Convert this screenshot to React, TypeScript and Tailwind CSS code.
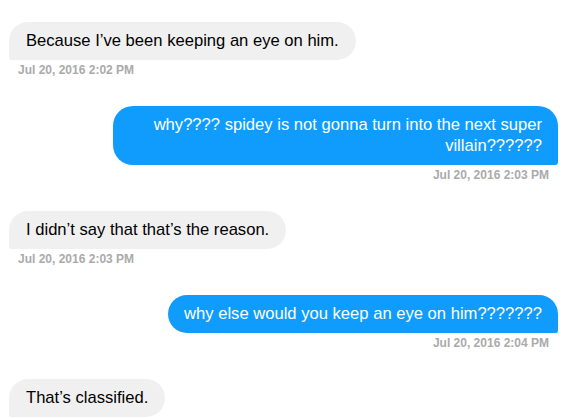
const messages = [
  { id: 1, mine: false, text: "Because I’ve been keeping an eye on him.", time: "Jul 20, 2016 2:02 PM" },
  { id: 2, mine: true, text: "why???? spidey is not gonna turn into the next super villain??????", time: "Jul 20, 2016 2:03 PM" },
  { id: 3, mine: false, text: "I didn’t say that that’s the reason.", time: "Jul 20, 2016 2:03 PM" },
  { id: 4, mine: true, text: "why else would you keep an eye on him???????", time: "Jul 20, 2016 2:04 PM" },
  { id: 5, mine: false, text: "That’s classified.", time: "" },
];

export default function App() {
  return (
    <div className="w-[566px] h-[419px] overflow-hidden bg-white font-['Liberation_Sans',Arial,sans-serif]">
      <div className="flex flex-col pt-[22px] pr-[8px] pl-[9px]">
        {messages.map((m) => (
          <div key={m.id} className={`flex flex-col mb-[29px] ${m.mine ? "items-end" : "items-start"}`}>
            <div
              className={
                m.mine
                  ? "max-w-[445px] bg-[#0f9cfd] text-white text-right text-[16.6px] leading-[21px] px-[16px] pt-2 pb-[9px] rounded-[20px] rounded-br-[3px]"
                  : "max-w-[445px] bg-[#f1f0f0] text-black text-[16.6px] leading-[21px] px-[17px] pt-2 pb-[9px] rounded-[20px] rounded-bl-[3px]"
              }
            >
              {m.text}
            </div>
            {m.time && (
              <p className={`mt-[3px] text-[12px] leading-[14px] font-bold text-[#aaaaaa] ${m.mine ? "mr-[9px]" : "ml-[9px]"}`}>
                {m.time}
              </p>
            )}
          </div>
        ))}
      </div>
    </div>
  );
}
